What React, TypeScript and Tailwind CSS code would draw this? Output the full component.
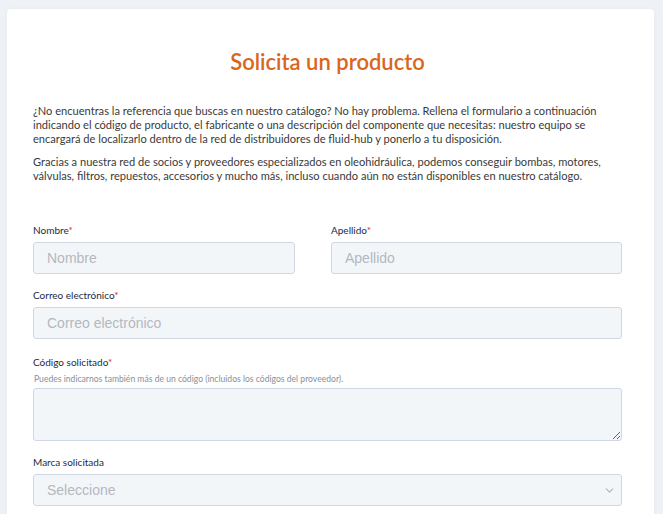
import { ChevronDown } from "lucide-react";

function Label({ text, required }: { text: string; required?: boolean }) {
  return (
    <label className="block text-[10px] leading-[14px] text-[#1e2a3b] mb-[5px]">
      {text}
      {required && <span className="text-[#e02424]">*</span>}
    </label>
  );
}

const inputCls =
  "w-full h-[32px] rounded-[3px] border border-[#cfd8e3] bg-[#f3f6f9] px-[13px] text-[14px] text-[#333] placeholder:text-[#b3b8bf] outline-none font-['Liberation_Sans',Arial,sans-serif]";

export default function App() {
  return (
    <div className="min-h-[514px] bg-[#eef1f5] pt-[9px] pl-[7px] overflow-hidden font-['Lato',sans-serif]">
      <div className="w-[647px] min-h-[520px] bg-white rounded-[4px] shadow-[0_0_4px_rgba(0,0,0,0.04)] pl-[26px] pr-[32px] pt-[38px] pb-8">
        <h1 className="text-center text-[22px] leading-[30px] font-semibold text-[#d9661c] mb-[27px]">
          Solicita un producto
        </h1>
        <div className="text-[11.1px] leading-[14px] text-[#3a3a3a] space-y-[9px] whitespace-nowrap">
          <p>
            ¿No encuentras la referencia que buscas en nuestro catálogo? No hay problema. Rellena el formulario a continuación
            <br />
            indicando el código de producto, el fabricante o una descripción del componente que necesitas: nuestro equipo se
            <br />
            encargará de localizarlo dentro de la red de distribuidores de fluid-hub y ponerlo a tu disposición.
          </p>
          <p>
            Gracias a nuestra red de socios y proveedores especializados en oleohidráulica, podemos conseguir bombas, motores,
            <br />
            válvulas, filtros, repuestos, accesorios y mucho más, incluso cuando aún no están disponibles en nuestro catálogo.
          </p>
        </div>

        <form className="mt-[40px]">
          <div className="grid grid-cols-[262px_291px] gap-x-[36px]">
            <div>
              <Label text="Nombre" required />
              <input className={inputCls} placeholder="Nombre" />
            </div>
            <div>
              <Label text="Apellido" required />
              <input className={inputCls} placeholder="Apellido" />
            </div>
          </div>

          <div className="mt-[14px]">
            <Label text="Correo electrónico" required />
            <input className={inputCls} placeholder="Correo electrónico" />
          </div>

          <div className="mt-[16px]">
            <Label text="Código solicitado" required />
            <p className="text-[8.6px] leading-[10px] text-[#8a8f98] mb-[4px] pl-[1px]">
              Puedes indicarnos también más de un código (incluidos los códigos del proveedor).
            </p>
            <textarea className={inputCls + " h-[53px] py-2 block resize-y"} />
          </div>

          <div className="mt-[14px]">
            <Label text="Marca solicitada" />
            <div className="relative">
              <select
                defaultValue=""
                className={inputCls + " appearance-none text-[#b3b8bf]"}
              >
                <option value="">Seleccione</option>
              </select>
              <ChevronDown
                className="absolute right-[6px] top-[10px] text-[#b0b4ba]"
                size={13}
                strokeWidth={2}
              />
            </div>
          </div>
        </form>
      </div>
    </div>
  );
}
